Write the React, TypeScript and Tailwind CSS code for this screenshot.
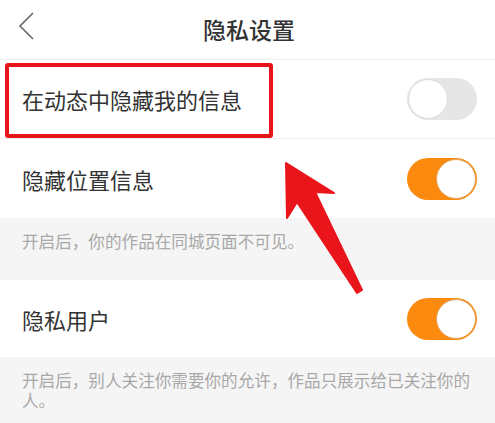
import React from "react";

const font = { fontFamily: '"Noto Sans CJK SC", "Noto Sans", sans-serif' };

function Toggle({ on }: { on: boolean }) {
  return on ? (
    <div className="flex h-[42px] w-[70px] items-center justify-end rounded-full bg-[#fb8a0f] p-[1px]">
      <div className="h-[40px] w-[40px] rounded-full border border-[#e3a257] bg-white" />
    </div>
  ) : (
    <div className="flex h-[42px] w-[70px] items-center justify-start rounded-full bg-[#e6e6e6] p-[1px]">
      <div className="h-[40px] w-[40px] rounded-full border border-[#dcdcdc] bg-white" />
    </div>
  );
}

function Row({ label, on, children }: { label: string; on: boolean; children?: React.ReactNode }) {
  return (
    <div className="relative flex h-[79px] items-center justify-between border-b border-[#eeeeee] bg-white pl-[22px] pr-[18px]">
      <span className="text-[22px] leading-none text-[#333333]">{label}</span>
      <Toggle on={on} />
      {children}
    </div>
  );
}

export default function App() {
  return (
    <div className="relative h-[423px] w-[495px] overflow-hidden bg-white" style={font}>
      <div className="relative flex h-[60px] items-center justify-center border-b border-[#eeeeee]">
        <svg className="absolute left-[17px] top-[12px]" width="20" height="30" viewBox="0 0 20 30">
          <polyline points="16,1 3,14 16,27" fill="none" stroke="#666666" strokeWidth="1.6" />
        </svg>
        <h1 className="pl-[3px] text-[23px] font-medium leading-none text-[#333333]">隐私设置</h1>
      </div>

      <Row label="在动态中隐藏我的信息" on={false}>
        <div className="absolute left-[5px] top-[3px] h-[75px] w-[268px] rounded-[3px] border-[4px] border-[#e8141c]" />
      </Row>
      <div className="flex h-[79px] items-center justify-between bg-white pl-[22px] pr-[18px]">
        <span className="text-[22px] leading-none text-[#333333]">隐藏位置信息</span>
        <Toggle on={true} />
      </div>
      <div className="h-[62px] bg-[#f5f5f5] px-[22px] pt-[13px] text-[16.6px] leading-[20px] text-[#a8a8a8]">
        开启后，你的作品在同城页面不可见。
      </div>

      <div className="flex h-[77px] items-center justify-between bg-white pl-[22px] pr-[18px]">
        <span className="text-[22px] leading-none text-[#333333]">隐私用户</span>
        <Toggle on={true} />
      </div>
      <div className="h-[80px] bg-[#f5f5f5] px-[22px] pt-[13px] text-[16.6px] leading-[20px] text-[#a8a8a8]">
        开启后，别人关注你需要你的允许，作品只展示给已关注你的人。
      </div>

      <svg className="pointer-events-none absolute left-0 top-0" width="495" height="423" viewBox="0 0 495 423">
        <polygon
          points="286,163 334,193 315,192 362,290 357,293 297,202 287,218"
          fill="#ea151b"
          stroke="#ea151b"
          strokeWidth="2"
          strokeLinejoin="round"
        />
      </svg>
    </div>
  );
}
